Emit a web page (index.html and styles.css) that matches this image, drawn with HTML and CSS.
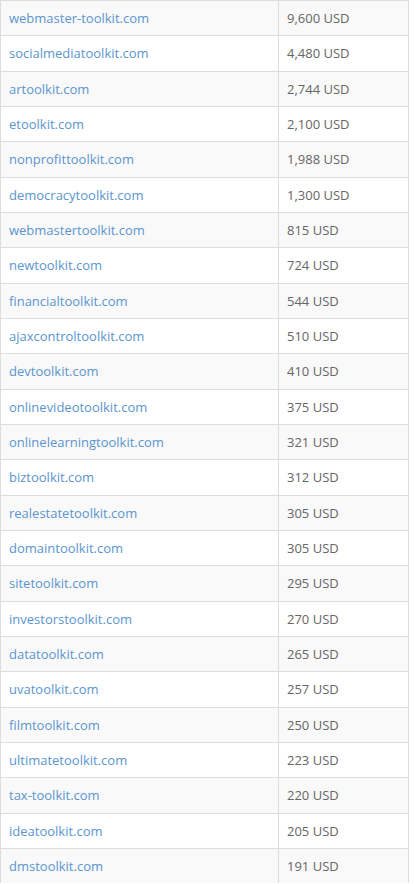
FILE: index.html
```html
<!DOCTYPE html>
<html>
<head>
<meta charset="utf-8">
<link rel="stylesheet" href="styles.css">
</head>
<body>
<table class="domains">
<tbody>
<tr><td class="name"><a href="#">webmaster-toolkit.com</a></td><td class="price">9,600 USD</td></tr>
<tr><td class="name"><a href="#">socialmediatoolkit.com</a></td><td class="price">4,480 USD</td></tr>
<tr><td class="name"><a href="#">artoolkit.com</a></td><td class="price">2,744 USD</td></tr>
<tr><td class="name"><a href="#">etoolkit.com</a></td><td class="price">2,100 USD</td></tr>
<tr><td class="name"><a href="#">nonprofittoolkit.com</a></td><td class="price">1,988 USD</td></tr>
<tr><td class="name"><a href="#">democracytoolkit.com</a></td><td class="price">1,300 USD</td></tr>
<tr><td class="name"><a href="#">webmastertoolkit.com</a></td><td class="price">815 USD</td></tr>
<tr><td class="name"><a href="#">newtoolkit.com</a></td><td class="price">724 USD</td></tr>
<tr><td class="name"><a href="#">financialtoolkit.com</a></td><td class="price">544 USD</td></tr>
<tr><td class="name"><a href="#">ajaxcontroltoolkit.com</a></td><td class="price">510 USD</td></tr>
<tr><td class="name"><a href="#">devtoolkit.com</a></td><td class="price">410 USD</td></tr>
<tr><td class="name"><a href="#">onlinevideotoolkit.com</a></td><td class="price">375 USD</td></tr>
<tr><td class="name"><a href="#">onlinelearningtoolkit.com</a></td><td class="price">321 USD</td></tr>
<tr><td class="name"><a href="#">biztoolkit.com</a></td><td class="price">312 USD</td></tr>
<tr><td class="name"><a href="#">realestatetoolkit.com</a></td><td class="price">305 USD</td></tr>
<tr><td class="name"><a href="#">domaintoolkit.com</a></td><td class="price">305 USD</td></tr>
<tr><td class="name"><a href="#">sitetoolkit.com</a></td><td class="price">295 USD</td></tr>
<tr><td class="name"><a href="#">investorstoolkit.com</a></td><td class="price">270 USD</td></tr>
<tr><td class="name"><a href="#">datatoolkit.com</a></td><td class="price">265 USD</td></tr>
<tr><td class="name"><a href="#">uvatoolkit.com</a></td><td class="price">257 USD</td></tr>
<tr><td class="name"><a href="#">filmtoolkit.com</a></td><td class="price">250 USD</td></tr>
<tr><td class="name"><a href="#">ultimatetoolkit.com</a></td><td class="price">223 USD</td></tr>
<tr><td class="name"><a href="#">tax-toolkit.com</a></td><td class="price">220 USD</td></tr>
<tr><td class="name"><a href="#">ideatoolkit.com</a></td><td class="price">205 USD</td></tr>
<tr><td class="name"><a href="#">dmstoolkit.com</a></td><td class="price">191 USD</td></tr>
</tbody>
</table>
</body>
</html>
```
FILE: styles.css
```css
html, body {
  margin: 0;
  padding: 0;
  background: #ffffff;
}
body {
  font-family: "Open Sans", "Liberation Sans", sans-serif;
  font-size: 13px;
  color: #555555;
}
.domains {
  width: 409px;
  border-collapse: collapse;
  border-left: 1px solid #dddddd;
  border-right: 1px solid #dddddd;
}
.domains tr:nth-child(odd) {
  background: #f9f9f9;
}
.domains td {
  border-top: 1px solid #dddddd;
  padding: 7px 8px 7px 8px;
  height: 20.33px;
  line-height: 20.33px;
  vertical-align: middle;
  box-sizing: content-box;
}
.domains td.name {
  width: 261px;
  border-right: 1px solid #dddddd;
}
.domains td.price {
  color: #666666;
}
.domains a {
  color: #5b95cf;
  text-decoration: none;
}
```
